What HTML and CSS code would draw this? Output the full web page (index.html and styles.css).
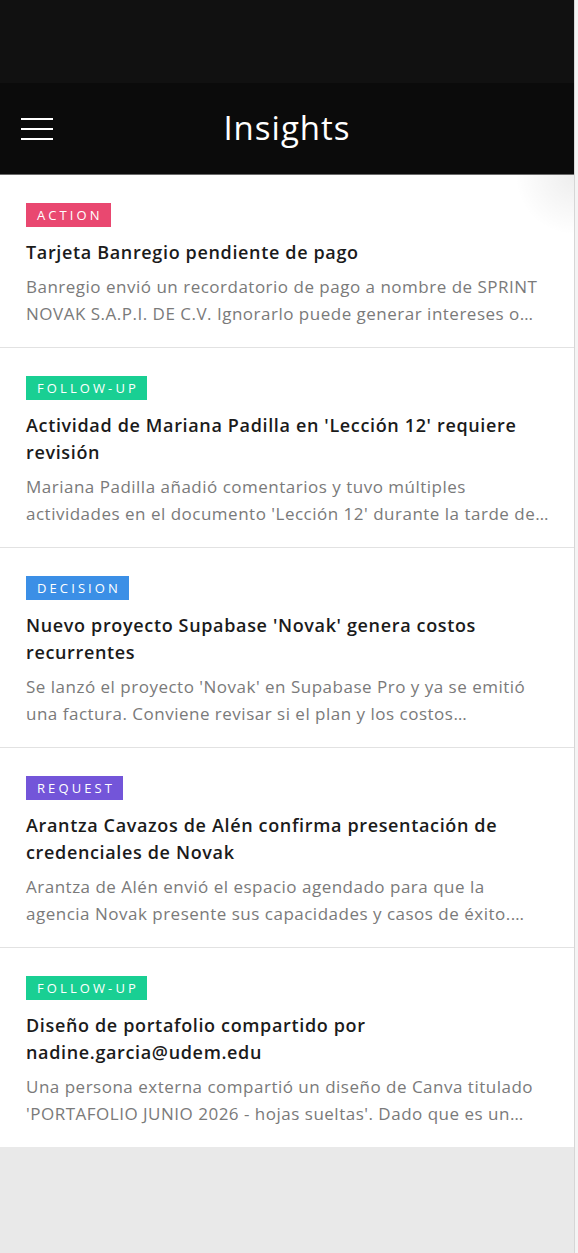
FILE: index.html
```html
<!DOCTYPE html>
<html lang="es">
<head>
  <meta charset="UTF-8">
  <meta name="viewport" content="width=device-width, initial-scale=1.0">
  <title>Insights</title>
  <link rel="stylesheet" href="styles.css">
</head>
<body>
  <div class="app">
    <div class="statusbar"></div>

    <header class="topbar">
      <a href="#" class="menu">
        <svg width="32" height="24" viewBox="0 0 32 24">
          <path d="M0 2h32M0 12h32M0 22h32" stroke="#fff" stroke-width="2" fill="none"/>
        </svg>
      </a>
      <h1>Insights</h1>
    </header>

    <ul class="list">
      <li class="item">
        <span class="tag action">ACTION</span>
        <h2>Tarjeta Banregio pendiente de pago</h2>
        <p>Banregio envió un recordatorio de pago a nombre de SPRINT NOVAK S.A.P.I. DE C.V. Ignorarlo puede generar intereses o…</p>
      </li>
      <li class="item">
        <span class="tag follow">FOLLOW-UP</span>
        <h2>Actividad de Mariana Padilla en 'Lección 12' requiere revisión</h2>
        <p>Mariana Padilla añadió comentarios y tuvo múltiples actividades en el documento 'Lección 12' durante la tarde de…</p>
      </li>
      <li class="item">
        <span class="tag decision">DECISION</span>
        <h2>Nuevo proyecto Supabase 'Novak' genera costos recurrentes</h2>
        <p>Se lanzó el proyecto 'Novak' en Supabase Pro y ya se emitió una factura. Conviene revisar si el plan y los costos…</p>
      </li>
      <li class="item">
        <span class="tag request">REQUEST</span>
        <h2>Arantza Cavazos de Alén confirma presentación de credenciales de Novak</h2>
        <p>Arantza de Alén envió el espacio agendado para que la agencia Novak presente sus capacidades y casos de éxito.…</p>
      </li>
      <li class="item">
        <span class="tag follow">FOLLOW-UP</span>
        <h2>Diseño de portafolio compartido por nadine.garcia@udem.edu</h2>
        <p>Una persona externa compartió un diseño de Canva titulado 'PORTAFOLIO JUNIO 2026 - hojas sueltas'. Dado que es un…</p>
      </li>
    </ul>
  </div>
</body>
</html>
```

FILE: styles.css
```css
*{
  margin: 0;
  padding: 0;
  box-sizing: border-box;
}

body{
  background-color: #f4f4f4;
  font-family: "Open Sans", "Noto Sans", sans-serif;
}

.app{
  width: 575px;
  min-height: 1253px;
  background-color: #e9e9e9;
  border-right: 1px solid #d6d6d6;
}

.statusbar{
  height: 83px;
  background-color: #111;
}

.topbar{
  height: 92px;
  background-color: #0b0b0b;
  border-bottom: 1px solid #6a6a6a;
  display: flex;
  align-items: center;
  justify-content: center;
  position: relative;
}

.topbar .menu{
  position: absolute;
  left: 21px;
  top: 34px;
  display: block;
  height: 24px;
}

.topbar h1{
  color: #fff;
  font-size: 33px;
  font-weight: 500;
  letter-spacing: 1px;
  margin-top: -2px;
}

.list{
  list-style: none;
  background-color: #fff;
  background-image: radial-gradient(circle at 575px 0, rgba(0,0,0,0.07), rgba(0,0,0,0) 60px);
}

.item{
  padding: 28px 24px 20px 26px;
  border-bottom: 1px solid #e2e2e2;
}

.item:last-child{
  border-bottom: none;
}

.tag{
  display: inline-block;
  height: 24px;
  line-height: 24px;
  padding: 0 8px 0 11px;
  color: #fff;
  font-size: 13px;
  font-weight: 500;
  letter-spacing: 3.1px;
}

.action{ background-color: #e94870; }
.follow{ background-color: #19cf93; }
.decision{ background-color: #3b8fe6; }
.request{ background-color: #7355d9; }

.item h2{
  margin-top: 12px;
  font-size: 18px;
  font-weight: 600;
  line-height: 27px;
  letter-spacing: 0.65px;
  color: #1b1b1b;
}

.item p{
  margin-top: 7px;
  font-size: 17px;
  line-height: 27px;
  color: #7a7a7a;
  letter-spacing: 0.5px;
}
```
